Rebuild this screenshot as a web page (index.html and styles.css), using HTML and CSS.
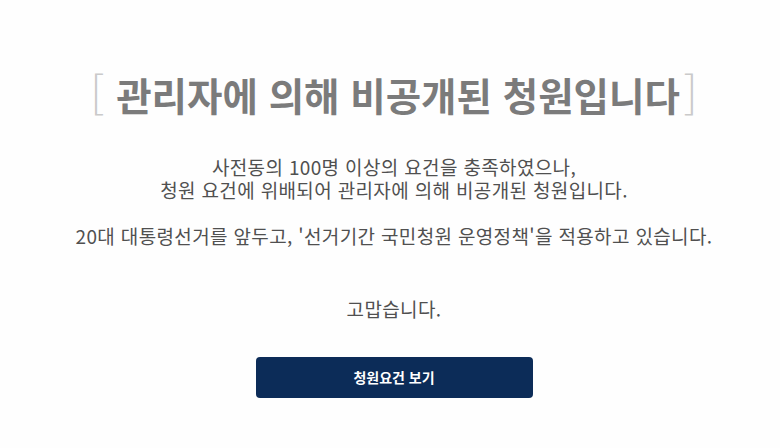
FILE: index.html
```html
<!DOCTYPE html>
<html lang="ko">
<head>
<meta charset="utf-8">
<link rel="stylesheet" href="styles.css">
</head>
<body>
<main class="notice">
  <h1 class="notice-title"><span class="bracket bracket-open">[</span>관리자에 의해 비공개된 청원입니다<span class="bracket bracket-close">]</span></h1>
  <p class="notice-text">사전동의 100명 이상의 요건을 충족하였으나,<br>청원 요건에 위배되어 관리자에 의해 비공개된 청원입니다.<br><br>20대 대통령선거를 앞두고, '선거기간 국민청원 운영정책'을 적용하고 있습니다.</p>
  <p class="notice-thanks">고맙습니다.</p>
  <a class="notice-button" href="#">청원요건 보기</a>
</main>
</body>
</html>
```

FILE: styles.css
```css
html, body {
  margin: 0;
  padding: 0;
  background: #fefefe;
}
body {
  font-family: "Noto Sans CJK KR", "Noto Sans", sans-serif;
  color: #555;
}
.notice {
  margin-left: 8px;
  padding-top: 63px;
  display: flex;
  flex-direction: column;
  align-items: center;
  text-align: center;
}
.notice-title {
  margin: 0;
  font-size: 38.5px;
  font-weight: 700;
  line-height: 58px;
  color: #7b7b7b;
  white-space: nowrap;
}
.bracket {
  font-size: 44px;
  font-weight: 300;
  color: #cacaca;
}
.bracket-open {
  margin-right: 12px;
}
.bracket-close {
  margin-left: 4px;
}
.notice-text {
  margin: 32px 0 0;
  font-size: 19px;
  letter-spacing: 0.35px;
  line-height: 23px;
  color: #505050;
}
.notice-thanks {
  margin: 50px 0 0;
  font-size: 19px;
  letter-spacing: 0.35px;
  line-height: 23px;
  color: #505050;
}
.notice-button {
  margin-top: 37px;
  width: 277px;
  height: 41px;
  border-radius: 4px;
  background: #0c2c58;
  color: #fff;
  font-size: 14px;
  font-weight: 700;
  line-height: 41px;
  text-decoration: none;
}
```
